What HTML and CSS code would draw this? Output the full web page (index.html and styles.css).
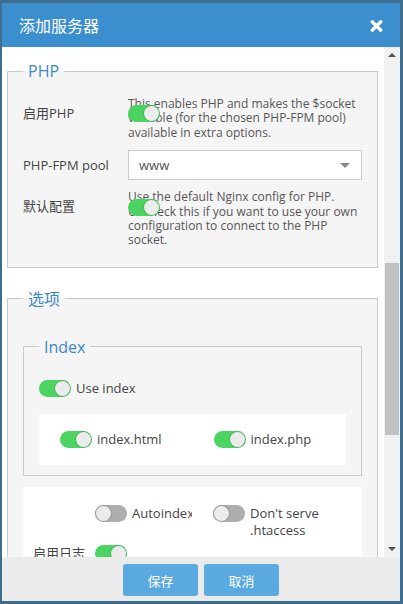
FILE: index.html
```html
<!DOCTYPE html>
<html lang="zh">
<head>
<meta charset="utf-8">
<title>添加服务器</title>
<link rel="stylesheet" href="styles.css">
</head>
<body>
<div class="dialog">
  <header class="dlg-head">
    <h1 class="dlg-title">添加服务器</h1>
    <span class="dlg-close" aria-label="close">
      <svg width="13" height="12" viewBox="0 0 13 12"><path d="M2.2 1.8 L10.8 10.2 M10.8 1.8 L2.2 10.2" stroke="#fff" stroke-width="3.3" stroke-linecap="round" fill="none"/></svg>
    </span>
  </header>
  <div class="dlg-body">
    <div class="dlg-scroll">
      <fieldset class="box box-php">
        <legend class="box-legend">PHP</legend>
        <div class="row">
          <label class="row-label">启用PHP</label>
          <div class="row-ctrl help">
            <span class="toggle is-on over"></span>
            This enables PHP and makes the $socket variable (for the chosen PHP-FPM pool) available in extra options.
          </div>
        </div>
        <div class="row row-center">
          <label class="row-label">PHP-FPM pool</label>
          <div class="row-ctrl">
            <div class="select"><span>www</span><span class="caret"></span></div>
          </div>
        </div>
        <div class="row">
          <label class="row-label">默认配置</label>
          <div class="row-ctrl help">
            <span class="toggle is-on over over-b"></span>
            Use the default Nginx config for PHP. Uncheck this if you want to use your own configuration to connect to the PHP socket.
          </div>
        </div>
      </fieldset>

      <fieldset class="box box-opts">
        <legend class="box-legend">选项</legend>
        <fieldset class="box box-index">
          <legend class="box-legend">Index</legend>
          <div class="check check-main"><span class="toggle is-on"></span><span class="check-text">Use index</span></div>
          <div class="panel panel-index">
            <div class="check"><span class="toggle is-on"></span><span class="check-text">index.html</span></div>
            <div class="check"><span class="toggle is-on"></span><span class="check-text">index.php</span></div>
          </div>
        </fieldset>
        <div class="panel panel-misc">
          <span class="misc-label"></span>
          <div class="check check-clip"><span class="toggle"></span><span class="check-text">Autoindex</span></div>
          <div class="check"><span class="toggle"></span><span class="check-text">Don't serve .htaccess</span></div>
          <span class="misc-label">启用日志</span>
          <div class="check"><span class="toggle is-on"></span></div>
        </div>
      </fieldset>
    </div>
    <div class="scrollbar">
      <div class="sb-btn"><span class="sb-up"></span></div>
      <div class="sb-track"><div class="sb-thumb"></div></div>
      <div class="sb-btn"><span class="sb-down"></span></div>
    </div>
  </div>
  <footer class="dlg-foot">
    <button class="btn">保存</button>
    <button class="btn">取消</button>
  </footer>
</div>
</body>
</html>
```
FILE: styles.css
```css
* { box-sizing: border-box; }
html, body { margin: 0; padding: 0; }
body {
  background: #3e6d8e;
  font-family: "Open Sans", "Noto Sans CJK SC", sans-serif;
  color: #444;
  width: 403px;
  height: 604px;
  overflow: hidden;
}
.dialog {
  margin: 3px 3px 3px 2px;
  height: 598px;
  display: flex;
  flex-direction: column;
  background: #fff;
}
.dlg-head {
  height: 44px;
  flex: none;
  background: #3c8fcf;
  display: flex;
  align-items: center;
  justify-content: space-between;
  padding: 0 17px;
}
.dlg-title {
  margin: 0;
  font-family: "Noto Sans CJK SC", sans-serif;
  font-weight: 400;
  font-size: 16px;
  color: #fff;
  line-height: 20px;
}
.dlg-close { display: flex; margin-top: 1px; }
.dlg-body {
  flex: 1;
  display: flex;
  min-height: 0;
}
.dlg-scroll {
  flex: 1;
  overflow: hidden;
  padding: 13px 6px 0 5px;
}
.box {
  margin: 0;
  border: 1px solid #c9c9c9;
  background: #f5f5f5;
  padding: 15px 15px 19px;
  min-width: 0;
}
.box-legend {
  padding: 0 5px;
  font-size: 16px;
  line-height: 22px;
  color: #3d88c7;
}
.box-php { display: flex; flex-direction: column; gap: 10px; }
.row {
  display: grid;
  grid-template-columns: 105px 1fr;
  align-items: start;
}
.row-center { align-items: center; }
.row-label {
  font-size: 13px;
  line-height: 18px;
  padding-top: 7px;
  color: #444;
}
.row-center .row-label { padding-top: 0; }
.help {
  position: relative;
  font-size: 12px;
  line-height: 14.4px;
  color: #555;
}
.select {
  height: 30px;
  border: 1px solid #ccc;
  background: #fff;
  display: flex;
  align-items: center;
  justify-content: space-between;
  padding: 0 11px 0 10px;
  font-size: 13px;
  color: #555;
}
.caret {
  width: 0; height: 0;
  border-left: 5px solid transparent;
  border-right: 5px solid transparent;
  border-top: 5px solid #8a8a8a;
}
.toggle {
  display: inline-block;
  flex: none;
  width: 32px;
  height: 17px;
  border-radius: 9px;
  background: #aeaeae;
  position: relative;
}
.toggle::after {
  content: "";
  position: absolute;
  top: 1px;
  left: 1px;
  width: 15px;
  height: 15px;
  border-radius: 50%;
  background: #ececec;
  box-shadow: 0 0 0 1px rgba(0,0,0,0.12);
}
.toggle.is-on { background: #4cd463; }
.toggle.is-on::after { left: auto; right: 1px; }
.toggle.over { position: absolute; left: 0; top: 8px; }
.toggle.over-b { top: 9px; }

.box-opts { margin-top: 20px; padding: 26px 15px 40px; }
.box-index { padding: 22px 15px 10px; }
.check {
  display: flex;
  align-items: flex-start;
  gap: 5px;
  font-size: 13px;
  line-height: 17px;
  color: #444;
}
.check-main { margin-bottom: 17px; }
.panel { background: #fff; }
.panel-index {
  display: grid;
  grid-template-columns: 1fr 1fr;
  padding: 17px 0;
}
.panel-index .check { padding-left: 21px; }
.panel-misc {
  margin-top: 11px;
  padding: 18px 10px 20px;
  display: grid;
  grid-template-columns: 62px 118px 118px;
  row-gap: 6px;
  align-items: start;
}
.check-clip { overflow: hidden; white-space: nowrap; width: 97px; }
.misc-label {
  font-size: 13px;
  line-height: 17px;
  color: #444;
  white-space: nowrap;
}
.scrollbar {
  width: 16px;
  flex: none;
  background: #f1f1f1;
  display: flex;
  flex-direction: column;
}
.sb-btn {
  height: 16px;
  flex: none;
  display: flex;
  align-items: center;
  justify-content: center;
}
.sb-up, .sb-down { width: 0; height: 0; border-left: 4px solid transparent; border-right: 4px solid transparent; }
.sb-up { border-bottom: 4px solid #505050; }
.sb-down { border-top: 4px solid #505050; }
.sb-track { flex: 1; }
.sb-thumb {
  margin: 200px 1px 0 1px;
  height: 172px;
  background: #c1c1c1;
}
.dlg-foot {
  height: 44px;
  flex: none;
  background: #ebebeb;
  display: flex;
  justify-content: center;
  align-items: flex-start;
  gap: 6px;
  padding-top: 7px;
}
.btn {
  width: 75px;
  height: 32px;
  border: none;
  border-radius: 3px;
  background: #5aaae1;
  color: #fff;
  font-family: "Noto Sans CJK SC", sans-serif;
  font-size: 13px;
  padding: 0;
}
```
